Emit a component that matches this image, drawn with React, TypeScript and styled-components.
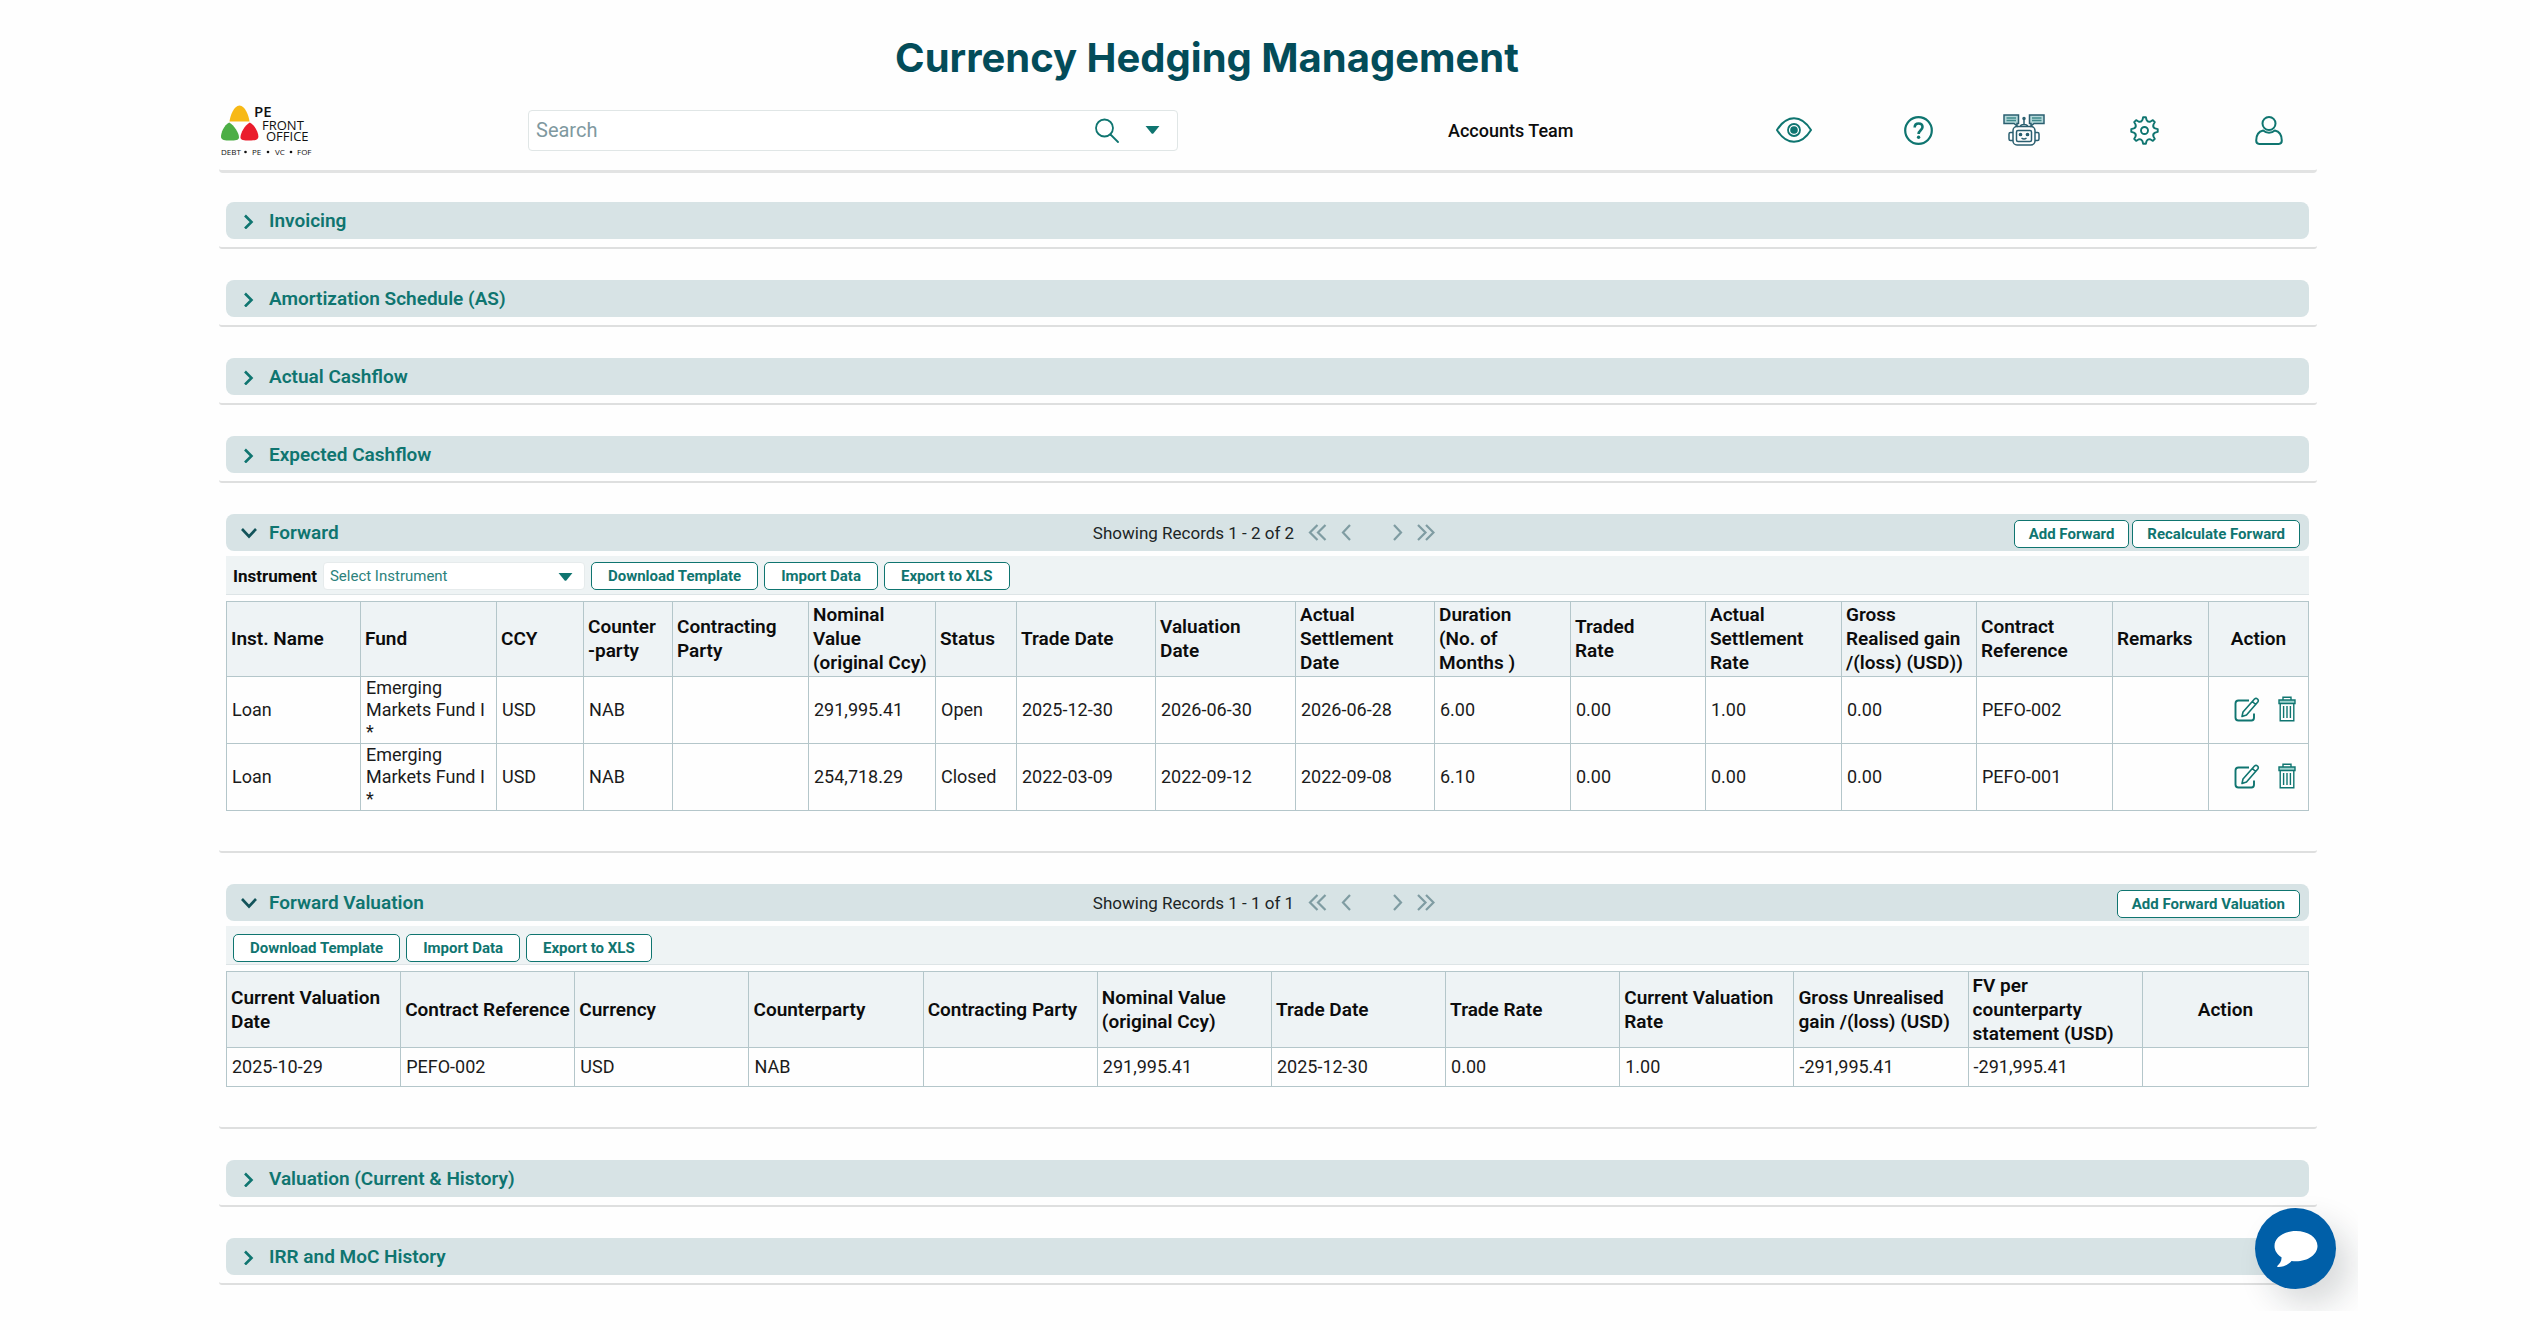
import React, { useState } from "react";
import styled, { createGlobalStyle } from "styled-components";

const teal = "#0f7570";
const line = "#b4c6ca";

const GlobalStyle = createGlobalStyle`
  *, *::before, *::after { box-sizing: border-box; }
  body { margin: 0; background: #fefefe; }
  body, button, input, select { font-family: Roboto, "Liberation Sans", sans-serif; }
`;

const Page = styled.div`
  position: relative;
  min-height: 100vh;
  padding: 34px 213px 0 219px;
  font-size: 18px;
  color: #0c0c0c;
`;

const Title = styled.h1`
  margin: 0;
  padding-right: 122px;
  text-align: center;
  font: 700 40px/48px Inter, "Liberation Sans", sans-serif;
  color: #034c59;
`;

const Header = styled.header`
  display: grid;
  grid-template-columns: 309px 650px 1fr 585px;
  align-items: center;
  height: 91px;
  padding-top: 8px;
  margin-bottom: 29px;
  border-bottom: 3px solid #e2e3e3;
  border-radius: 0 0 4px 4px;
`;

const LogoLink = styled.a`
  display: block;
  width: 92px;
  height: 52px;
  margin-left: 1px;
  svg { overflow: visible; }
`;

const SearchBox = styled.form`
  display: flex;
  align-items: center;
  height: 41px;
  border: 1px solid #e0e6e6;
  border-radius: 4px;
  background: #fff;
`;

const SearchInput = styled.input`
  flex: 1;
  min-width: 0;
  height: 100%;
  padding: 0 7px;
  border: 0;
  outline: 0;
  background: transparent;
  font-size: 20px;
  color: #222;
  &::placeholder { color: #7f999f; opacity: 1; }
`;

const IconButton = styled.button`
  display: inline-flex;
  align-items: center;
  justify-content: center;
  padding: 0;
  border: 0;
  background: none;
  color: ${teal};
  cursor: pointer;
  svg { display: block; }
`;

const SearchTools = styled.div`
  display: flex;
  gap: 26px;
  padding-right: 17px;
`;

const Team = styled.div`
  padding-left: 270px;
  font-weight: 500;
  white-space: nowrap;
`;

const HeaderIcons = styled.nav`
  display: grid;
  grid-template-columns: 124fr 125fr 86fr 153fr 96fr;
  justify-items: center;
`;

const SectionBox = styled.section<{ $open: boolean }>`
  padding: 0 8px ${(p) => (p.$open ? 40 : 8)}px 7px;
  margin-bottom: 31px;
  border-bottom: 2px solid #dedfdf;
  border-radius: 0 0 3px 3px;
`;

const Bar = styled.div`
  display: grid;
  grid-template-columns: 1fr auto 1fr;
  align-items: center;
  height: 37px;
  padding: 0 9px 0 15px;
  border-radius: 8px;
  background: #d7e3e5;
`;

const SectionToggle = styled.button`
  display: flex;
  align-items: center;
  justify-self: start;
  gap: 12px;
  padding: 0;
  border: 0;
  background: none;
  font-size: 19px;
  font-weight: 600;
  line-height: 24px;
  color: ${teal};
  cursor: pointer;
`;

const Pager = styled.div`
  display: flex;
  align-items: center;
  gap: 14px;
  padding-right: 13px;
  font-size: 17px;
  color: #1c2526;
  ${IconButton} { color: #7f9ca2; }
  ${IconButton}:nth-of-type(3) { margin-left: 26px; }
`;

const BarActions = styled.div`
  display: flex;
  justify-content: flex-end;
  gap: 3px;
  padding-top: 3px;
`;

const OutlineButton = styled.button<{ $snug?: boolean }>`
  height: 28px;
  padding: 0 ${(p) => (p.$snug ? 14 : 16)}px;
  border: 1px solid ${teal};
  border-radius: 5px;
  background: #fff;
  font-size: 15px;
  font-weight: 700;
  color: ${teal};
  white-space: nowrap;
  cursor: pointer;
`;

const Toolbar = styled.div<{ $low?: boolean }>`
  display: flex;
  align-items: ${(p) => (p.$low ? "flex-end" : "center")};
  gap: 6px;
  height: 39px;
  margin: 5px 0 6px;
  padding: ${(p) => (p.$low ? "0 7px 2px" : "2px 7px 0")};
  border-bottom: 1px solid #dde4e6;
  background: #eef3f4;
`;

const FieldLabel = styled.label`
  font-size: 17px;
  font-weight: 700;
`;

const SelectWrap = styled.div`
  position: relative;
  width: 262px;
  height: 28px;
  svg { position: absolute; right: 12px; top: 11px; pointer-events: none; color: ${teal}; }
`;

const Select = styled.select`
  width: 100%;
  height: 100%;
  padding: 0 30px 0 6px;
  border: 1px solid #e6ebec;
  border-radius: 4px;
  appearance: none;
  background: #fff;
  font-size: 15px;
  color: #2c827c;
`;

const Table = styled.table`
  width: 100%;
  table-layout: fixed;
  border-collapse: collapse;
`;

const Col = styled.col<{ $w: number }>`
  width: ${(p) => p.$w}px;
`;

const Th = styled.th<{ $tall: number; $center?: boolean }>`
  height: ${(p) => p.$tall}px;
  padding: ${(p) => (p.$center ? "0" : "0 0 0 4px")};
  border: 1px solid ${line};
  background: #eef3f5;
  text-align: ${(p) => (p.$center ? "center" : "left")};
  font-size: 19px;
  font-weight: 600;
  line-height: 24px;
  white-space: pre-line;
`;

const Td = styled.td<{ $tall: number }>`
  height: ${(p) => p.$tall}px;
  padding: 0 0 0 5px;
  border: 1px solid ${line};
  line-height: 22px;
  white-space: pre-line;
  color: #1b1b1b;
`;

const RowActions = styled.div`
  display: flex;
  justify-content: flex-end;
  gap: 18px;
  padding: 0 12px 2px 0;
`;

const ChatButton = styled.button`
  position: absolute;
  right: 194px;
  bottom: 41px;
  display: flex;
  align-items: center;
  justify-content: center;
  width: 81px;
  height: 81px;
  padding: 0;
  border: 0;
  border-radius: 50%;
  background: #005fa8;
  box-shadow: 14px 16px 32px rgba(20, 30, 40, 0.16);
  clip-path: inset(-20px -22px -22px -20px);
  cursor: pointer;
`;

const Logo = () => (
  <svg width="92" height="52" viewBox="0 0 92 52" aria-hidden="true">
    <path d="M19.500 1.500C14 1.500 10 12 9.500 17.500h20C29 12 25 1.500 19.500 1.500z" fill="#f7b916" />
    <path d="M9.200 18.500C4 21 .8 29 1 33c.2 3 4 3.600 9 3.600 5.500 0 8.800-.6 9-3.200C19 29 14 21 9.200 18.500z" fill="#4cae45" />
    <path d="M29.800 18.500C35 21 38.600 29 38.400 33c-.2 3-4 3.600-9 3.600-5.500 0-8.700-.6-8.900-3.200C20.400 29 25 21 29.800 18.500z" fill="#ea1c2c" />
    <g fontFamily="'Open Sans', sans-serif" fill="#111">
      <text x="34" y="13" fontSize="15" fontWeight="600">PE</text>
      <text x="42" y="25.500" fontSize="13" fontWeight="400">FRONT</text>
      <text x="46" y="37" fontSize="13" fontWeight="400">OFFICE</text>
      <text x="1" y="51" fontSize="8" fontWeight="400">DEBT</text>
      <text x="32" y="51" fontSize="8" fontWeight="400">PE</text>
      <text x="55" y="51" fontSize="8" fontWeight="400">VC</text>
      <text x="77" y="51" fontSize="8" fontWeight="400">FOF</text>
      <circle cx="25.500" cy="48" r="1.300" />
      <circle cx="48" cy="48" r="1.300" />
      <circle cx="71" cy="48" r="1.300" />
    </g>
  </svg>
);

const SearchIcon = () => (
  <svg width="24" height="25" viewBox="0 0 24 25" fill="none" stroke="currentColor" strokeWidth="1.800" strokeLinecap="round">
    <circle cx="9.500" cy="10" r="8.500" />
    <path d="M15.500 16.500l7.500 7.500" />
  </svg>
);

const Caret = ({ w }: { w: number }) => (
  <svg width={w} height="8" viewBox="0 0 14 8" preserveAspectRatio="none" fill="currentColor">
    <path d="M.5 0h13L8 7.300q-1 1-2 0z" />
  </svg>
);

const EyeIcon = () => (
  <svg width="36" height="26" viewBox="0 0 36 26" fill="none" stroke="currentColor" strokeWidth="2">
    <path d="M1 13C5 6.500 11 1.200 18 1.200S31 6.500 35 13C31 19.500 25 24.800 18 24.800S5 19.500 1 13z" strokeLinejoin="round" />
    <circle cx="18" cy="13" r="6" strokeWidth="1.800" />
    <circle cx="18" cy="13" r="3.800" fill="currentColor" stroke="none" />
  </svg>
);

const HelpIcon = () => (
  <svg width="29" height="29" viewBox="0 0 29 29" fill="none" stroke="currentColor" strokeWidth="2.200">
    <circle cx="14.500" cy="14.500" r="13.300" />
    <path d="M10.700 11.500c0-2.400 1.600-4 3.900-4s3.900 1.500 3.900 3.600c0 3-3.900 3.300-3.900 6.900" strokeWidth="2.600" />
    <circle cx="14.600" cy="21.300" r="1.700" fill="currentColor" stroke="none" />
  </svg>
);

const BotIcon = () => (
  <svg width="42" height="32" viewBox="0 0 42 32" fill="none" stroke="#2b5f70" strokeWidth="1.500">
    <path d="M1 1h14.500v8.500h-1.500v2.500l-3-2.500H1z" fill="#b5d8da" />
    <path d="M41 1H26.500v8.500H28v2.500l3-2.500h10z" fill="#b5d8da" />
    <path d="M3.500 4h9.500M3.500 6.500h9.500M29 4h9.500M29 6.500h9.500" stroke="#3f8a8c" />
    <path d="M21 5.500v5M17.500 12.500c0-1.500 1.500-2 3.500-2s3.500.5 3.500 2" />
    <circle cx="21" cy="4.500" r="1" fill="#2b5f70" />
    <rect x="10" y="12.500" width="22" height="18.500" rx="4" />
    <rect x="13.500" y="16.500" width="15" height="11" rx="1.500" />
    <path d="M10 18.500H7.500q-1.500 0-1.500 1.500v5q0 1.500 1.500 1.500H10M32 18.500h2.500q1.500 0 1.500 1.500v5q0 1.500-1.500 1.500H32" />
    <path d="M18.500 24q2.500 2 5 0" />
    <circle cx="17.500" cy="20.500" r="1.100" fill="#2b5f70" />
    <circle cx="24.500" cy="20.500" r="1.100" fill="#2b5f70" />
  </svg>
);

const gearPath = (() => {
  const teeth = 8;
  const points: string[] = [];
  for (let i = 0; i < teeth; i++) {
    const at = (deg: number, r: number) => {
      const a = ((i * 360) / teeth + deg - 90) * (Math.PI / 180);
      return `${(14.5 + r * Math.cos(a)).toFixed(2)} ${(14.5 + r * Math.sin(a)).toFixed(2)}`;
    };
    points.push(`${i ? "L" : "M"}${at(-6, 13.3)}L${at(6, 13.3)}L${at(11, 10.8)}Q${at(22.5, 8.6)} ${at(34, 10.8)}`);
  }
  return points.join("") + "Z";
})();

const GearIcon = () => (
  <svg width="29" height="29" viewBox="0 0 29 29" fill="none" stroke="currentColor" strokeWidth="1.900" strokeLinejoin="round">
    <path d={gearPath} />
    <circle cx="14.500" cy="14.500" r="3.500" />
  </svg>
);

const UserIcon = () => (
  <svg width="28" height="29" viewBox="0 0 28 29" fill="none" stroke="currentColor" strokeWidth="2" strokeLinejoin="round">
    <circle cx="14" cy="7.500" r="6.500" />
    <path d="M8.200 14.500C3.500 15.500 1.200 19.500 1.200 24.500c0 2.300 1.100 3.400 3 3.400h19.600c1.900 0 3-1.100 3-3.400 0-5-2.300-9-7-10-1.600 1.500-3.600 2.200-5.800 2.200s-4.200-.7-5.800-2.200z" />
  </svg>
);

const Chevron = ({ open }: { open: boolean }) => (
  <svg width="16" height="16" viewBox="0 0 16 16" fill="none" stroke={open ? "#12535a" : "currentColor"} strokeWidth="2.600">
    {open ? <path d="M1 4l7 7.500L15 4" /> : <path d="M4 2.500L10.500 9 4 15.500" />}
  </svg>
);

const pagerPaths = {
  first: "M9.500 1L2 8.500 9.500 16M17.500 1L10 8.500l7.500 7.500",
  prev: "M9 1L2 8.500 9 16",
  next: "M2 1l7 7.500L2 16",
  last: "M1 1l7.500 7.500L1 16M9 1l7.500 7.500L9 16",
};

const PagerIcon = ({ kind, w }: { kind: keyof typeof pagerPaths; w: number }) => (
  <svg width={w} height="17" viewBox={`0 0 ${w} 17`} fill="none" stroke="currentColor" strokeWidth="2.200">
    <path d={pagerPaths[kind]} />
  </svg>
);

const EditIcon = () => (
  <svg width="26" height="25" viewBox="0 0 26 25" fill="none" stroke="currentColor" strokeWidth="1.600" strokeLinejoin="round">
    <path d="M15 3.500H4.500Q1.500 3.500 1.500 6.500v14q0 3 3 3h13q2.500 0 2.500-3v-4" strokeWidth="1.900" />
    <path d="M9 15l11.500-13q1.500-1.200 3 0 1.400 1.400.3 3L12.500 18 8 19.500zM18.500 4.500l3 3" />
  </svg>
);

const TrashIcon = () => (
  <svg width="18" height="26" viewBox="0 0 18 26" fill="none" stroke="currentColor" strokeWidth="1.400">
    <path d="M1 4h16v3.500H1z" fill="#9fd3cf" />
    <path d="M5 4V1.200h8V4M2.200 7.500v17.300h13.600V7.500" />
    <path d="M5.600 10v12M9 10v12M12.400 10v12" />
  </svg>
);

const ChatIcon = () => (
  <svg width="44" height="38" viewBox="0 0 44 38" fill="#fff">
    <path d="M22 1C10 1 .5 7.500.5 16c0 4.700 2.700 8.500 7 11.200.3 3.300-1.500 6.200-4 8.500-.6.800-.2 1.500.8 1.400C10 36.500 15 34.500 17.500 31c1.500.2 3 .3 4.500.3 12 0 21.500-6.800 21.500-15.300S34 1 22 1z" />
  </svg>
);

type Column = { label: string; w: number; center?: boolean };

const forwardColumns: Column[] = [
  { label: "Inst. Name", w: 134 },
  { label: "Fund", w: 136 },
  { label: "CCY", w: 87 },
  { label: "Counter\n-party", w: 89 },
  { label: "Contracting\nParty", w: 136 },
  { label: "Nominal\nValue\n(original Ccy)", w: 127 },
  { label: "Status", w: 81 },
  { label: "Trade Date", w: 139 },
  { label: "Valuation\nDate", w: 140 },
  { label: "Actual\nSettlement\nDate", w: 139 },
  { label: "Duration\n(No. of\nMonths )", w: 136 },
  { label: "Traded\nRate", w: 135 },
  { label: "Actual\nSettlement\nRate", w: 136 },
  { label: "Gross\nRealised gain\n/(loss) (USD))", w: 135 },
  { label: "Contract\nReference", w: 136 },
  { label: "Remarks", w: 96 },
  { label: "Action", w: 100, center: true },
];

const forwardRows = [
  ["Loan", "Emerging\nMarkets Fund I\n*", "USD", "NAB", "", "291,995.41", "Open", "2025-12-30", "2026-06-30", "2026-06-28", "6.00", "0.00", "1.00", "0.00", "PEFO-002", ""],
  ["Loan", "Emerging\nMarkets Fund I\n*", "USD", "NAB", "", "254,718.29", "Closed", "2022-03-09", "2022-09-12", "2022-09-08", "6.10", "0.00", "0.00", "0.00", "PEFO-001", ""],
];

const valuationColumns: Column[] = [
  { label: "Current Valuation\nDate", w: 174 },
  { label: "Contract Reference", w: 174 },
  { label: "Currency", w: 174 },
  { label: "Counterparty", w: 174 },
  { label: "Contracting Party", w: 174 },
  { label: "Nominal Value\n(original Ccy)", w: 174 },
  { label: "Trade Date", w: 174 },
  { label: "Trade Rate", w: 174 },
  { label: "Current Valuation\nRate", w: 174 },
  { label: "Gross Unrealised\ngain /(loss) (USD)", w: 174 },
  { label: "FV per\ncounterparty\nstatement (USD)", w: 174 },
  { label: "Action", w: 166, center: true },
];

const valuationRows = [
  ["2025-10-29", "PEFO-002", "USD", "NAB", "", "291,995.41", "2025-12-30", "0.00", "1.00", "-291,995.41", "-291,995.41"],
];

type GridProps = { columns: Column[]; rows: string[][]; headTall: number; rowTall: number; editable?: boolean };

const DataGrid = ({ columns, rows, headTall, rowTall, editable }: GridProps) => (
  <Table>
    <colgroup>
      {columns.map((c) => <Col key={c.label} $w={c.w} />)}
    </colgroup>
    <thead>
      <tr>
        {columns.map((c) => (
          <Th key={c.label} scope="col" $tall={headTall} $center={c.center}>{c.label}</Th>
        ))}
      </tr>
    </thead>
    <tbody>
      {rows.map((row, r) => (
        <tr key={r}>
          {row.map((value, i) => <Td key={i} $tall={rowTall}>{value}</Td>)}
          <Td $tall={rowTall}>
            {editable && (
              <RowActions>
                <IconButton type="button" aria-label="Edit"><EditIcon /></IconButton>
                <IconButton type="button" aria-label="Delete"><TrashIcon /></IconButton>
              </RowActions>
            )}
          </Td>
        </tr>
      ))}
    </tbody>
  </Table>
);

type SectionProps = { title: string; records?: string; actions?: string[]; children?: React.ReactNode };

const Section = ({ title, records, actions = [], children }: SectionProps) => {
  const [open, setOpen] = useState(Boolean(children));
  return (
    <SectionBox $open={open && Boolean(children)}>
      <Bar>
        <SectionToggle type="button" aria-expanded={open} onClick={() => setOpen(!open)}>
          <Chevron open={open} />
          {title}
        </SectionToggle>
        {open && records && (
          <Pager>
            <span>{records}</span>
            <IconButton type="button" aria-label="First page"><PagerIcon kind="first" w={19} /></IconButton>
            <IconButton type="button" aria-label="Previous page"><PagerIcon kind="prev" w={11} /></IconButton>
            <IconButton type="button" aria-label="Next page"><PagerIcon kind="next" w={11} /></IconButton>
            <IconButton type="button" aria-label="Last page"><PagerIcon kind="last" w={18} /></IconButton>
          </Pager>
        )}
        {open && actions.length > 0 && (
          <BarActions>
            {actions.map((a) => <OutlineButton key={a} type="button" $snug>{a}</OutlineButton>)}
          </BarActions>
        )}
      </Bar>
      {open && children}
    </SectionBox>
  );
};

const TransferButtons = () => (
  <>
    <OutlineButton type="button">Download Template</OutlineButton>
    <OutlineButton type="button">Import Data</OutlineButton>
    <OutlineButton type="button">Export to XLS</OutlineButton>
  </>
);

export default function App() {
  return (
    <Page>
      <GlobalStyle />
      <Title>Currency Hedging Management</Title>
      <Header>
        <LogoLink href="#" aria-label="PE Front Office"><Logo /></LogoLink>
        <SearchBox role="search" onSubmit={(e) => e.preventDefault()}>
          <SearchInput type="text" placeholder="Search" aria-label="Search" />
          <SearchTools>
            <IconButton type="submit" aria-label="Run search"><SearchIcon /></IconButton>
            <IconButton type="button" aria-label="Search options"><Caret w={15} /></IconButton>
          </SearchTools>
        </SearchBox>
        <Team>Accounts Team</Team>
        <HeaderIcons aria-label="Tools">
          <IconButton type="button" aria-label="View"><EyeIcon /></IconButton>
          <IconButton type="button" aria-label="Help"><HelpIcon /></IconButton>
          <IconButton type="button" aria-label="Assistant"><BotIcon /></IconButton>
          <IconButton type="button" aria-label="Settings"><GearIcon /></IconButton>
          <IconButton type="button" aria-label="Account"><UserIcon /></IconButton>
        </HeaderIcons>
      </Header>
      <main>
        <Section title="Invoicing" />
        <Section title="Amortization Schedule (AS)" />
        <Section title="Actual Cashflow" />
        <Section title="Expected Cashflow" />
        <Section title="Forward" records="Showing Records 1 - 2 of 2" actions={["Add Forward", "Recalculate Forward"]}>
          <Toolbar>
            <FieldLabel htmlFor="instrument">Instrument</FieldLabel>
            <SelectWrap>
              <Select id="instrument" defaultValue="">
                <option value="">Select Instrument</option>
                <option value="loan">Loan</option>
              </Select>
              <Caret w={15} />
            </SelectWrap>
            <TransferButtons />
          </Toolbar>
          <DataGrid columns={forwardColumns} rows={forwardRows} headTall={75} rowTall={67} editable />
        </Section>
        <Section title="Forward Valuation" records="Showing Records 1 - 1 of 1" actions={["Add Forward Valuation"]}>
          <Toolbar $low>
            <TransferButtons />
          </Toolbar>
          <DataGrid columns={valuationColumns} rows={valuationRows} headTall={76} rowTall={39} />
        </Section>
        <Section title="Valuation (Current & History)" />
        <Section title="IRR and MoC History" />
      </main>
      <ChatButton type="button" aria-label="Open chat"><ChatIcon /></ChatButton>
    </Page>
  );
}
